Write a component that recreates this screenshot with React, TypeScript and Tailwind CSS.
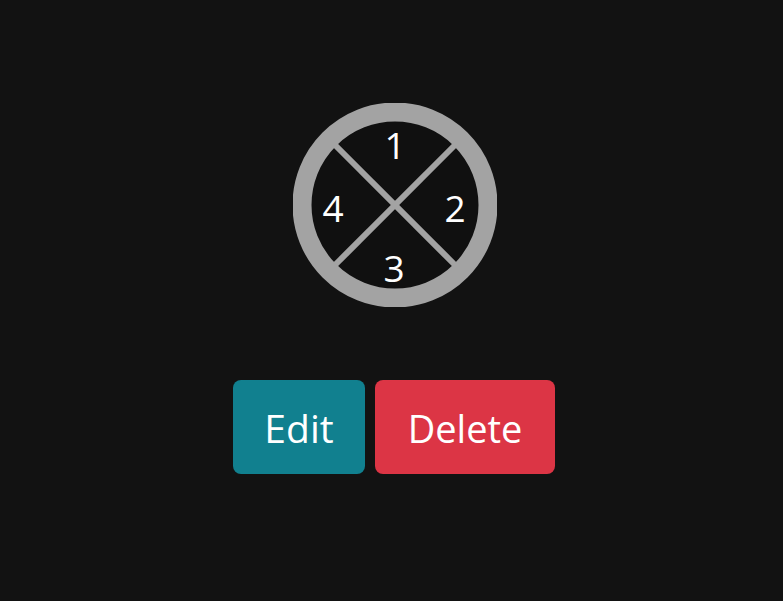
export default function App() {
  return (
    <div
      className="flex min-h-[601px] w-full flex-col items-center bg-[#121212] pl-[5px] pt-[103px]"
      style={{ fontFamily: '"Open Sans", "Noto Sans", sans-serif' }}
    >
      <Dial />
      <div className="mt-[73px] flex gap-[10px]">
        <button className="flex h-[94px] w-[132px] items-center justify-center rounded-lg bg-[#11808f] pt-[2px] text-[39px] text-white">
          Edit
        </button>
        <button className="flex h-[94px] w-[180px] items-center justify-center rounded-lg bg-[#dc3545] pt-[2px] text-[38px] text-white">
          Delete
        </button>
      </div>
    </div>
  );
}

function Dial() {
  return (
    <div className="relative ml-[2px] h-[204px] w-[204px] text-[37px] leading-none text-white">
      <svg width="204" height="204" viewBox="0 0 204 204" className="absolute inset-0">
        <circle cx="102" cy="102" r="93" fill="#101010" stroke="#a3a3a3" strokeWidth="19" />
        <line x1="42" y1="42" x2="162" y2="162" stroke="#a3a3a3" strokeWidth="6" />
        <line x1="162" y1="42" x2="42" y2="162" stroke="#a3a3a3" strokeWidth="6" />
      </svg>
      <span className="absolute left-[102px] top-[41px] -translate-x-1/2 -translate-y-1/2">1</span>
      <span className="absolute left-[162px] top-[104px] -translate-x-1/2 -translate-y-1/2">2</span>
      <span className="absolute left-[101px] top-[164px] -translate-x-1/2 -translate-y-1/2">3</span>
      <span className="absolute left-[40px] top-[104px] -translate-x-1/2 -translate-y-1/2">4</span>
    </div>
  );
}
